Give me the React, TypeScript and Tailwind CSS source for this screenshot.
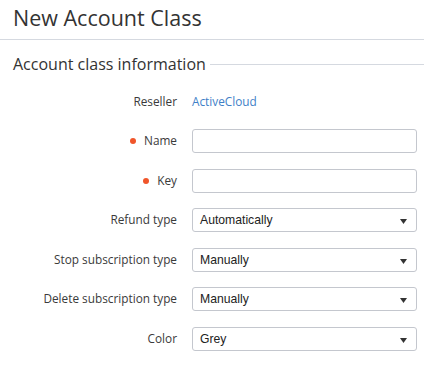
import React from "react";

const Caret = () => (
  <svg width="7" height="5" viewBox="0 0 7 5" className="absolute right-[9px] top-[10px]">
    <path d="M0 0H7L3.5 5Z" fill="#333" />
  </svg>
);

const Row = ({ label, required, className, children }: { label: string; required?: boolean; className?: string; children: React.ReactNode }) => (
  <div className={"flex items-center h-[24px] " + (className ?? "")}>
    <div className="w-[178px] flex justify-end items-center pr-[1px] text-[11.8px] text-[#3a3a3a]">
      {required && <span className="w-[6px] h-[6px] rounded-full bg-[#f0552a] mr-[8px]" />}
      <span>{label}</span>
    </div>
    <div className="ml-[14px] w-[225px]">{children}</div>
  </div>
);

const Select = ({ value }: { value: string }) => (
  <div className="relative h-[24px] w-full border border-[#c4c7ce] rounded-[3px] bg-white flex items-center pl-[7px] text-[12.2px] text-[#222]" style={{ fontFamily: '"Liberation Sans", Arial, sans-serif' }}>
    {value}
    <Caret />
  </div>
);

const Input = () => <div className="h-[24px] w-full border border-[#c4c7ce] rounded-[3px] bg-white" />;

export default function App() {
  return (
    <div className="w-[430px] h-[365px] bg-white" style={{ fontFamily: '"Open Sans", sans-serif' }}>
      <div className="w-[424px]">
        <div className="h-[40px] border-b border-[#d5d9e0] pl-[13px] pt-[2px] text-[21.5px] leading-[32px] text-[#333]">New Account Class</div>
        <div className="flex items-center pl-[13px] mt-[12px] h-[24px]">
          <span className="text-[16px] text-[#333] leading-[24px]">Account class information</span>
          <div className="flex-1 ml-[4px] h-px bg-[#d5d9e0]" />
        </div>
        <div className="flex flex-col mt-[14px]">
          <div className="flex items-center h-[24px]">
            <div className="w-[178px] text-right pr-[1px] text-[11.8px] text-[#3a3a3a]">Reseller</div>
            <div className="ml-[14px] text-[11.8px] text-[#3f7fc7]">ActiveCloud</div>
          </div>
          <Row label="Name" required className="mt-[15px]"><Input /></Row>
          <Row label="Key" required className="mt-[16px]"><Input /></Row>
          <Row label="Refund type" className="mt-[15px]"><Select value="Automatically" /></Row>
          <Row label="Stop subscription type" className="mt-[16px]"><Select value="Manually" /></Row>
          <Row label="Delete subscription type" className="mt-[15px]"><Select value="Manually" /></Row>
          <Row label="Color" className="mt-[16px]"><Select value="Grey" /></Row>
        </div>
      </div>
    </div>
  );
}
